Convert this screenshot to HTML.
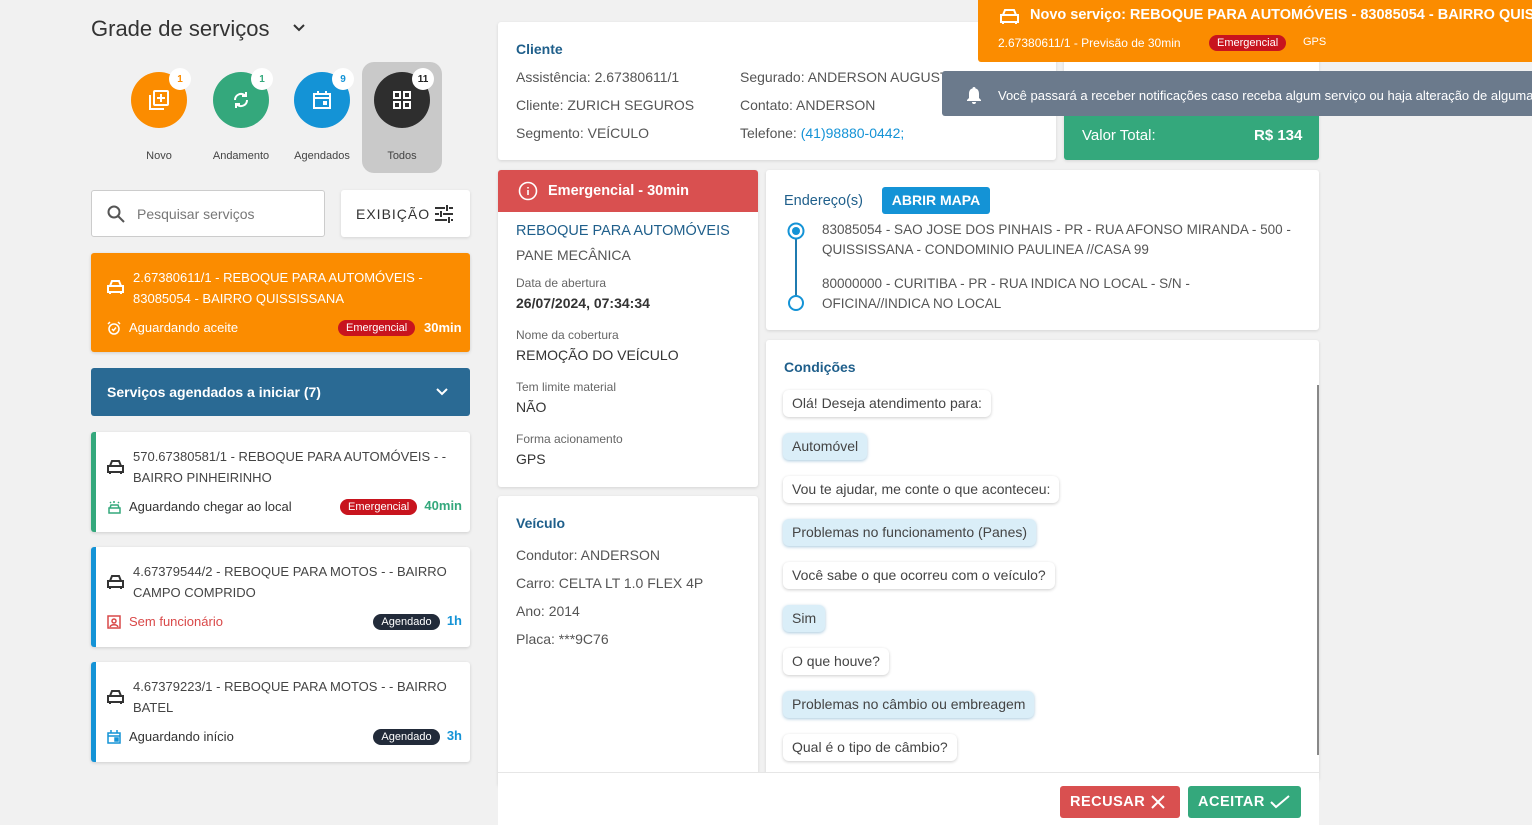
<!DOCTYPE html>
<html><head><meta charset="utf-8"><style>
*{box-sizing:border-box;margin:0;padding:0}
body{width:1532px;height:825px;overflow:hidden;background:#f1f1f1;font-family:"Liberation Sans",sans-serif;color:#333;position:relative;font-size:13.5px}
.a{position:absolute}
.card{position:absolute;background:#fff;border-radius:3px;box-shadow:0 1px 3px rgba(0,0,0,.12)}
.circ{position:absolute;width:56px;height:56px;border-radius:50%;display:flex;align-items:center;justify-content:center}
.bdg{position:absolute;width:22px;height:22px;border-radius:50%;background:#fff;font-size:10px;font-weight:bold;display:flex;align-items:center;justify-content:center;right:-4px;top:-4px}
.lbl{position:absolute;font-size:11px;color:#444;width:80px;text-align:center}
.pill{display:inline-block;border-radius:10px;color:#fff;font-size:11px;padding:2px 8px}
.svc{position:absolute;left:91px;width:379px;height:100px;background:#fff;border-radius:3px;box-shadow:0 1px 3px rgba(0,0,0,.15)}
.svc .t{position:absolute;left:37px;top:14px;font-size:13px;line-height:21px;color:#444;width:320px}
.svc .s{position:absolute;left:33px;top:67px;font-size:13px}
.svc .r{position:absolute;right:8px;top:64px;font-size:13px;font-weight:bold}
.h{color:#1f5f8b;font-size:14px;font-weight:bold}
.lt{color:#666;font-size:12px}
.v{color:#333;font-size:14px}
.bub{position:absolute;left:783px;height:27px;border-radius:6px;background:#fff;box-shadow:0 1px 3px rgba(0,0,0,.2);font-size:14px;color:#444;padding:5px 9px;white-space:nowrap}
.bub.b{background:#daeef8;box-shadow:0 1px 3px rgba(40,120,170,.4)}
</style></head><body>
<div class="a" style="left:91px;top:16px;font-size:22px;color:#333">Grade de serviços</div>
<svg class="a" style="left:292px;top:23px" width="14" height="10"><path d="M2 2l5 5 5-5" stroke="#333" stroke-width="2" fill="none"/></svg>

<div class="a" style="left:362px;top:62px;width:80px;height:111px;background:#c9c9c9;border-radius:12px"></div>
<div class="circ" style="left:131px;top:72px;background:#fb8c00"><svg width="22" height="22" viewBox="0 0 22 22"><rect x="6" y="2" width="14" height="14" rx="1" fill="none" stroke="#fff" stroke-width="2"/><path d="M2 6v14h14" stroke="#fff" stroke-width="2" fill="none"/><path d="M13 5v8M9 9h8" stroke="#fff" stroke-width="2"/></svg><div class="bdg" style="color:#fb8c00">1</div></div>
<div class="circ" style="left:213px;top:72px;background:#34a87c"><svg width="20" height="20" viewBox="0 0 20 20"><path d="M4 10a6 6 0 0 1 10-4.5M16 10a6 6 0 0 1-10 4.5" stroke="#fff" stroke-width="2" fill="none"/><path d="M15 2v4h-4M5 18v-4h4" stroke="#fff" stroke-width="2" fill="none"/></svg><div class="bdg" style="color:#34a87c">1</div></div>
<div class="circ" style="left:294px;top:72px;background:#1493d6"><svg width="20" height="20" viewBox="0 0 20 20"><rect x="2" y="4" width="16" height="14" fill="none" stroke="#fff" stroke-width="2"/><path d="M2 8h16M6 1v4M14 1v4" stroke="#fff" stroke-width="2"/><rect x="11" y="11" width="4" height="4" fill="#fff"/></svg><div class="bdg" style="color:#1493d6">9</div></div>
<div class="circ" style="left:374px;top:72px;background:#2e2e2e"><svg width="20" height="20" viewBox="0 0 20 20" fill="none" stroke="#fff" stroke-width="2"><rect x="2" y="2" width="6" height="6"/><rect x="12" y="2" width="6" height="6"/><rect x="2" y="12" width="6" height="6"/><rect x="12" y="12" width="6" height="6"/></svg><div class="bdg" style="color:#222">11</div></div>
<div class="lbl" style="left:119px;top:150px">Novo</div>
<div class="lbl" style="left:201px;top:150px">Andamento</div>
<div class="lbl" style="left:282px;top:150px">Agendados</div>
<div class="lbl" style="left:362px;top:150px">Todos</div>

<div class="a" style="left:91px;top:190px;width:234px;height:47px;background:#fff;border:1px solid #ccc;border-radius:3px"></div>
<svg class="a" style="left:107px;top:205px" width="18" height="18"><circle cx="7" cy="7" r="5.5" stroke="#555" stroke-width="2" fill="none"/><path d="M11 11l6 6" stroke="#555" stroke-width="2"/></svg>
<div class="a" style="left:137px;top:206px;font-size:14px;color:#777">Pesquisar serviços</div>
<div class="card" style="left:341px;top:190px;width:129px;height:47px"></div>
<div class="a" style="left:356px;top:206px;font-size:14px;color:#333;letter-spacing:1px">EXIBIÇÃO</div>
<svg class="a" style="left:434px;top:204px" width="20" height="20" stroke="#333" stroke-width="2"><path d="M1 4h10M15 4h4M13 1v6M1 10h4M9 10h10M7 7v6M1 16h12M17 16h2M15 13v6"/></svg>

<div class="a" style="left:91px;top:253px;width:379px;height:99px;background:#fb8c00;border-radius:3px;box-shadow:0 1px 3px rgba(0,0,0,.15)"></div>
<svg class="a" style="left:107px;top:280px" width="17" height="15" fill="none" stroke="#fff" stroke-width="2"><path d="M3 6l2-5h7l2 5M1 6h15v6H1zM3 12v2M14 12v2"/></svg>
<div class="a" style="left:133px;top:267px;font-size:13px;line-height:21px;color:#fff;width:320px">2.67380611/1 - REBOQUE PARA AUTOMÓVEIS - 83085054 - BAIRRO QUISSISSANA</div>
<svg class="a" style="left:107px;top:321px" width="14" height="14" fill="none" stroke="#fff" stroke-width="1.5"><circle cx="7" cy="8" r="5"/><path d="M1 3l2-2M13 3l-2-2M5 8l1.5 1.5L9 6.5"/></svg>
<div class="a" style="left:129px;top:320px;font-size:13px;color:#fff">Aguardando aceite</div>
<div class="a" style="left:338px;top:319px"><span class="pill" style="background:#c8141e">Emergencial</span></div>
<div class="a" style="left:424px;top:320px;font-size:13px;color:#fff;font-weight:bold">30min</div>

<div class="a" style="left:91px;top:368px;width:379px;height:48px;background:#2a6a94;border-radius:3px"></div>
<div class="a" style="left:107px;top:384px;color:#fff;font-size:14px;font-weight:bold">Serviços agendados a iniciar (7)</div>
<svg class="a" style="left:435px;top:387px" width="14" height="9"><path d="M2 2l5 5 5-5" stroke="#fff" stroke-width="2" fill="none"/></svg>

<div class="svc" style="top:432px;border-left:5px solid #34a87c"><svg class="a" style="left:11px;top:28px" width="17" height="15" fill="none" stroke="#333" stroke-width="2"><path d="M3 6l2-5h7l2 5M1 6h15v6H1zM3 12v2M14 12v2"/></svg><div class="t">570.67380581/1 - REBOQUE PARA AUTOMÓVEIS - - BAIRRO PINHEIRINHO</div><svg class="a" style="left:11px;top:68px" width="15" height="15" fill="none" stroke="#34a87c" stroke-width="1.5"><path d="M3 8l1-3h7l1 3M2 8h11v5H2zM7 1v2M3 2l1 1M12 2l-1 1"/></svg><div class="s">Aguardando chegar ao local</div><div class="r" style="top:66px"><span class="pill" style="background:#c8141e;font-weight:normal">Emergencial</span>&nbsp; <span style="color:#34a87c">40min</span></div></div>
<div class="svc" style="top:547px;border-left:5px solid #1493d6"><svg class="a" style="left:11px;top:28px" width="17" height="15" fill="none" stroke="#333" stroke-width="2"><path d="M3 6l2-5h7l2 5M1 6h15v6H1zM3 12v2M14 12v2"/></svg><div class="t">4.67379544/2 - REBOQUE PARA MOTOS - - BAIRRO CAMPO COMPRIDO</div><svg class="a" style="left:11px;top:68px" width="14" height="14" fill="none" stroke="#d94848" stroke-width="1.5"><rect x="1" y="1" width="12" height="12"/><circle cx="7" cy="6" r="2"/><path d="M3 12c1-3 7-3 8 0"/></svg><div class="s" style="color:#d94848">Sem funcionário</div><div class="r" style="top:66px"><span class="pill" style="background:#222b3a;font-weight:normal">Agendado</span>&nbsp; <span style="color:#1493d6">1h</span></div></div>
<div class="svc" style="top:662px;border-left:5px solid #1493d6"><svg class="a" style="left:11px;top:28px" width="17" height="15" fill="none" stroke="#333" stroke-width="2"><path d="M3 6l2-5h7l2 5M1 6h15v6H1zM3 12v2M14 12v2"/></svg><div class="t">4.67379223/1 - REBOQUE PARA MOTOS - - BAIRRO BATEL</div><svg class="a" style="left:11px;top:68px" width="14" height="14" fill="none" stroke="#1493d6" stroke-width="1.5"><rect x="1" y="3" width="12" height="10"/><path d="M1 6h12M4 0v3M10 0v3"/><rect x="8" y="8" width="3" height="3" fill="#1493d6"/></svg><div class="s">Aguardando início</div><div class="r" style="top:66px"><span class="pill" style="background:#222b3a;font-weight:normal">Agendado</span>&nbsp; <span style="color:#1493d6">3h</span></div></div>

<!-- Cliente -->
<div class="card" style="left:498px;top:22px;width:558px;height:138px"></div>
<div class="a h" style="left:516px;top:41px">Cliente</div>
<div class="a v" style="left:516px;top:63px;color:#555;line-height:28px">Assistência: 2.67380611/1<br>Cliente: ZURICH SEGUROS<br>Segmento: VEÍCULO</div>
<div class="a v" style="left:740px;top:63px;color:#555;line-height:28px">Segurado: ANDERSON AUGUST<br>Contato: ANDERSON<br>Telefone: <span style="color:#1493d6">(41)98880-0442;</span></div>
<div class="card" style="left:1064px;top:22px;width:255px;height:138px"></div>
<div class="a" style="left:1064px;top:110px;width:255px;height:50px;background:#34a87c;border-radius:0 0 3px 3px"></div>
<div class="a" style="left:1082px;top:127px;color:#fff;font-size:15px">Valor Total:</div>
<div class="a" style="left:1254px;top:127px;color:#fff;font-size:15px;font-weight:bold">R$ 134</div>

<!-- Emergencial -->
<div class="card" style="left:498px;top:170px;width:260px;height:317px"></div>
<div class="a" style="left:498px;top:170px;width:260px;height:42px;background:#d95050;border-radius:3px 3px 0 0"></div>
<svg class="a" style="left:518px;top:181px" width="20" height="20" fill="none" stroke="#fff" stroke-width="1.6"><circle cx="10" cy="10" r="8.5"/><path d="M10 9v5M10 6v1.5"/></svg>
<div class="a" style="left:548px;top:183px;color:#fff;font-size:14.5px;font-weight:bold">Emergencial - 30min</div>
<div class="a" style="left:516px;top:223px;color:#1f5f8b;font-size:14.5px">REBOQUE PARA AUTOMÓVEIS</div>
<div class="a v" style="left:516px;top:247px;color:#555">PANE MECÂNICA</div>
<div class="a lt" style="left:516px;top:276px">Data de abertura</div>
<div class="a v" style="left:516px;top:295px;font-weight:bold;color:#333">26/07/2024, 07:34:34</div>
<div class="a lt" style="left:516px;top:328px">Nome da cobertura</div>
<div class="a v" style="left:516px;top:347px">REMOÇÃO DO VEÍCULO</div>
<div class="a lt" style="left:516px;top:380px">Tem limite material</div>
<div class="a v" style="left:516px;top:399px">NÃO</div>
<div class="a lt" style="left:516px;top:432px">Forma acionamento</div>
<div class="a v" style="left:516px;top:451px">GPS</div>

<!-- Veiculo -->
<div class="card" style="left:498px;top:496px;width:260px;height:290px"></div>
<div class="a h" style="left:516px;top:515px">Veículo</div>
<div class="a v" style="left:516px;top:541px;color:#555;line-height:28px">Condutor: ANDERSON<br>Carro: CELTA LT 1.0 FLEX 4P<br>Ano: 2014<br>Placa: ***9C76</div>

<!-- Endereco -->
<div class="card" style="left:766px;top:170px;width:553px;height:160px"></div>
<div class="a" style="left:784px;top:193px;color:#1f5f8b;font-size:14.5px">Endereço(s)</div>
<div class="a" style="left:882px;top:187px;width:108px;height:27px;background:#1493d6;border-radius:3px;color:#fff;font-weight:bold;font-size:14px;text-align:center;line-height:27px">ABRIR MAPA</div>
<svg class="a" style="left:785px;top:220px" width="22" height="94"><line x1="11" y1="12" x2="11" y2="76" stroke="#1f7bb0" stroke-width="2"/><circle cx="11" cy="11" r="7.5" fill="#fff" stroke="#1493d6" stroke-width="2"/><circle cx="11" cy="11" r="4" fill="#1493d6"/><circle cx="11" cy="83" r="7" fill="#fff" stroke="#1493d6" stroke-width="2"/></svg>
<div class="a" style="left:822px;top:220px;font-size:13.5px;color:#555;line-height:20px;width:480px">83085054 - SAO JOSE DOS PINHAIS - PR - RUA AFONSO MIRANDA - 500 - QUISSISSANA - CONDOMINIO PAULINEA //CASA 99</div>
<div class="a" style="left:822px;top:274px;font-size:13.5px;color:#555;line-height:20px;width:480px">80000000 - CURITIBA - PR - RUA INDICA NO LOCAL - S/N -<br>OFICINA//INDICA NO LOCAL</div>

<!-- Condicoes -->
<div class="card" style="left:766px;top:340px;width:553px;height:440px"></div>
<div class="a h" style="left:784px;top:359px">Condições</div>
<div class="a" style="left:1317px;top:385px;width:2px;height:370px;background:#888"></div>
<div class="bub" style="top:390px">Olá! Deseja atendimento para:</div>
<div class="bub b" style="top:433px">Automóvel</div>
<div class="bub" style="top:476px">Vou te ajudar, me conte o que aconteceu:</div>
<div class="bub b" style="top:519px">Problemas no funcionamento (Panes)</div>
<div class="bub" style="top:562px">Você sabe o que ocorreu com o veículo?</div>
<div class="bub b" style="top:605px">Sim</div>
<div class="bub" style="top:648px">O que houve?</div>
<div class="bub b" style="top:691px">Problemas no câmbio ou embreagem</div>
<div class="bub" style="top:734px">Qual é o tipo de câmbio?</div>

<!-- footer -->
<div class="a" style="left:498px;top:772px;width:821px;height:53px;background:#fff;border-top:1px solid #e6e6e6"></div>
<div class="a" style="left:1060px;top:786px;width:120px;height:32px;background:#d95050;border-radius:3px;color:#fff;font-weight:bold;font-size:14.5px;line-height:32px;padding-left:10px;letter-spacing:.5px">RECUSAR</div>
<svg class="a" style="left:1150px;top:794px" width="16" height="16" stroke="#fff" stroke-width="2"><path d="M2 2l12 12M14 2L2 14"/></svg>
<div class="a" style="left:1188px;top:786px;width:113px;height:32px;background:#34a87c;border-radius:3px;color:#fff;font-weight:bold;font-size:14.5px;line-height:32px;padding-left:10px;letter-spacing:.5px">ACEITAR</div>
<svg class="a" style="left:1270px;top:795px" width="20" height="14" stroke="#fff" stroke-width="2" fill="none"><path d="M1 7l5 5L19 1"/></svg>

<!-- banners -->
<div class="a" style="left:978px;top:0;width:554px;height:62px;background:#fb8c00;border-radius:0 0 0 3px"></div>
<svg class="a" style="left:1000px;top:9px" width="19" height="16" fill="none" stroke="#fff" stroke-width="2"><path d="M3 6l2-5h9l2 5M1 6h17v7H1zM3 13v2M16 13v2"/></svg>
<div class="a" style="left:1030px;top:7px;color:#fff;font-size:14.5px;font-weight:bold;white-space:nowrap">Novo serviço: REBOQUE PARA AUTOMÓVEIS - 83085054 - BAIRRO QUISSISSANA</div>
<div class="a" style="left:998px;top:36px;color:#fff;font-size:12px;white-space:nowrap">2.67380611/1 - Previsão de 30min</div>
<div class="a" style="left:1209px;top:34px"><span class="pill" style="background:#c8141e">Emergencial</span></div>
<div class="a" style="left:1303px;top:36px;color:#fff;font-size:11px">GPS</div>
<div class="a" style="left:942px;top:71px;width:590px;height:45px;background:#6b7a8c;border-radius:3px 0 0 3px"></div>
<svg class="a" style="left:965px;top:86px" width="18" height="18" fill="#fff"><path d="M9 1a1.5 1.5 0 0 0-1.5 1.5C5 3 4 5 4 8v4l-2 2v1h14v-1l-2-2V8c0-3-1-5-3.5-5.5A1.5 1.5 0 0 0 9 1zM7 16a2 2 0 0 0 4 0z"/></svg>
<div class="a" style="left:998px;top:88px;color:#fff;font-size:13px;white-space:nowrap">Você passará a receber notificações caso receba algum serviço ou haja alteração de alguma informação</div>
</body></html>
